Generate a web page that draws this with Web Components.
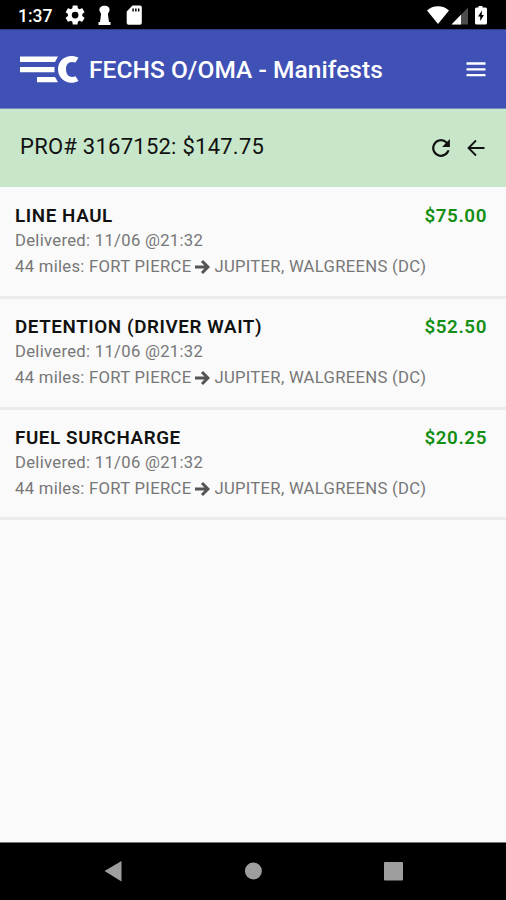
<!DOCTYPE html>
<html lang="en"><head><meta charset="utf-8"><title>Manifests</title>
<style>html,body{margin:0;height:100%}body{font-family:Roboto,sans-serif;background:#fafafa;overflow:hidden}</style></head>
<body>
<phone-screen>
<status-bar slot="top"></status-bar>
<app-header slot="top">FECHS O/OMA - Manifests</app-header>
<pro-summary slot="top">PRO# 3167152: $147.75</pro-summary>
<charge-item amount="$75.00">LINE HAUL</charge-item>
<charge-item amount="$52.50">DETENTION (DRIVER WAIT)</charge-item>
<charge-item amount="$20.25">FUEL SURCHARGE</charge-item>
<nav-bar slot="bottom"></nav-bar>
</phone-screen>
<script>
const define=(name,html)=>{
  customElements.define(name,class extends HTMLElement{
    constructor(){super();
      const t=document.createElement('template');
      t.innerHTML='<style>:host{display:flex;box-sizing:border-box}svg{display:block;flex:none}.t{white-space:nowrap}</style>'+html;
      this.attachShadow({mode:'open'}).append(t.content.cloneNode(true));
    }
    connectedCallback(){
      const a=this.shadowRoot.querySelector('.amount');
      if(a)a.textContent=this.getAttribute('amount');
    }
  });
};
define('phone-screen',`<style>:host{flex-direction:column;width:506px;height:900px;background:#fafafa}main{flex:1;padding-top:1px}</style>
<slot name="top"></slot><main><slot></slot></main><slot name="bottom"></slot>`);
define('status-bar',`<style>:host{height:30px;background:#000;color:#fff;align-items:center;padding:0 18px 0 18px;border-bottom:1px solid #2c3d85}
.t{font-size:17.5px;font-weight:500;letter-spacing:0;width:47px;line-height:30px;padding-top:2px}.gap{flex:1}</style>
<span class="t">1:37</span>
<svg width="90" height="29" viewBox="65 0 90 29" fill="#fff"><g transform="translate(63.6 3.500) scale(.96)"><path d="M19.43 12.98c.04-.32.07-.64.07-.98s-.03-.66-.07-.98l2.11-1.65c.19-.15.24-.42.12-.64l-2-3.46c-.12-.22-.39-.3-.61-.22l-2.49 1c-.52-.4-1.08-.73-1.69-.98l-.38-2.65A.49.49 0 0014 2h-4c-.25 0-.46.18-.49.42l-.38 2.65c-.61.25-1.17.59-1.69.98l-2.49-1c-.23-.09-.49 0-.61.22l-2 3.46c-.13.22-.07.49.12.64l2.11 1.65c-.04.32-.07.65-.07.98s.03.66.07.98l-2.11 1.65c-.19.15-.24.42-.12.64l2 3.46c.12.22.39.3.61.22l2.49-1c.52.4 1.08.73 1.69.98l.38 2.65c.03.24.24.42.49.42h4c.25 0 .46-.18.49-.42l.38-2.65c.61-.25 1.17-.59 1.69-.98l2.49 1c.23.09.49 0 .61-.22l2-3.46c.12-.22.07-.49-.12-.64zM12 15.500a3.500 3.500 0 110-7 3.500 3.500 0 010 7z"/></g>
<path d="M99.600 11C97.500 4 111.500 4 109.400 11L107.900 14L109 22H110.500V25H98.500V22H100L101.100 14Z"/><path fill-rule="evenodd" d="M132.500 5.500h7.500q1.800 0 1.800 1.800v15.400q0 2-1.800 2h-11.500q-1.800 0-1.800-2V11.500zM132.300 8.500v3h1.500v-3zm2.800 0v3h1.500v-3zm2.800 0v3h1.500v-3z"/></svg>
<span class="gap"></span>
<svg width="63" height="29" viewBox="425 0 63 29" fill="#fff"><path d="M427 10.500C432.500 4.700 443.500 4.700 449 10.500L438 24Z"/><path d="M468 7.500V24.500H451.500Z" fill="#4d4d4d"/><path d="M461 14.700V24.500H451.500Z"/><path fill-rule="evenodd" d="M478.500 6h4v1.600h3q1.500 0 1.500 1.500v13.900q0 1.500-1.500 1.500h-9q-1.500 0-1.500-1.500V9.100q0-1.500 1.500-1.500h2zM482 10.500L478 16.500h2.200v4.500l3.800-6h-2.300z"/></svg>`);
define('app-header',`<style>:host{height:78.500px;background:#3f51b5;color:#fff;align-items:center;padding:0 20px;border-bottom:1px solid #7a88c0}
.t{flex:1;font-size:24.500px;font-weight:500;margin-left:10px;letter-spacing:.05px;line-height:32px;padding-top:3px}</style>
<svg width="59" height="34" viewBox="20 52 59 34" fill="#fff"><path d="M20 56.500H58L55 62H20ZM20 67H54.500V72.300H20ZM37 77H55L58 82.300H37Z"/><path d="M78.500 57.500L75.500 62.500C69 60.500 66 64 66 69.300C66 75 69.500 78.500 75.500 76.300L78.500 81C69 86 58 80 58 69.300C58 58.500 69 53 78.500 57.500Z"/></svg>
<span class="t"><slot></slot></span>
<svg width="20" height="18" viewBox="0 0 20 18" stroke="#fff" stroke-width="2.300"><path d="M.5 3.500h19M.5 9.300h19M.5 15.100h19"/></svg>`);
define('pro-summary',`<style>:host{height:78.500px;background:#c8e6c9;color:#111;align-items:center;padding:0 20px}
.t{flex:1;font-size:22px;letter-spacing:.25px;line-height:30px;padding-bottom:2px}.b{margin-left:15px}</style>
<span class="t"><slot></slot></span>
<svg width="20" height="20" viewBox="3 3 18 18" fill="#111"><path d="M17.650 6.350A8 8 0 1019.730 14h-2.080A6 6 0 1112 6c1.660 0 3.140.69 4.220 1.780L13 11h7V4z"/></svg>
<svg class="b" width="20" height="22" viewBox="0 0 20 22" fill="none" stroke="#111" stroke-width="1.800"><path d="M18.500 11H3M10 3.500L2.500 11L10 18.500"/></svg>`);
define('charge-item',`<style>:host{flex-direction:column;height:110.800px;padding:16.300px 19px 0 15px;border-bottom:3px solid #ebebeb}
.row{display:flex;justify-content:space-between;line-height:25px;font-size:18.800px;color:#111;font-weight:600;letter-spacing:.6px}
.amount{color:#138f13}.sub{font-size:16.650px;color:#777;line-height:24px;letter-spacing:.3px}.route{display:flex;line-height:28px;align-items:center}svg{margin:0 4px}</style>
<div class="row"><span class="t"><slot></slot></span><span class="amount t"></span></div>
<div class="sub t">Delivered: 11/06 @21:32</div>
<div class="sub route t"><span>44 miles: FORT PIERCE</span><svg width="15" height="16" viewBox="0 0 15 16" fill="none" stroke="#555" stroke-width="3"><path d="M0 8H13M7 2L13 8L7 14"/></svg><span>JUPITER, WALGREENS (DC)</span></div>`);
define('nav-bar',`<style>:host{height:58px;background:#000;border-top:1px solid #777}</style>
<svg width="506" height="57" viewBox="0 843 506 57" fill="#9e9e9e"><path d="M104.500 871L121.500 861V881.500Z"/><circle cx="253.400" cy="871" r="8.500"/><rect x="384" y="862" width="19" height="18.500" rx="1"/></svg>`);
</script></body></html>
